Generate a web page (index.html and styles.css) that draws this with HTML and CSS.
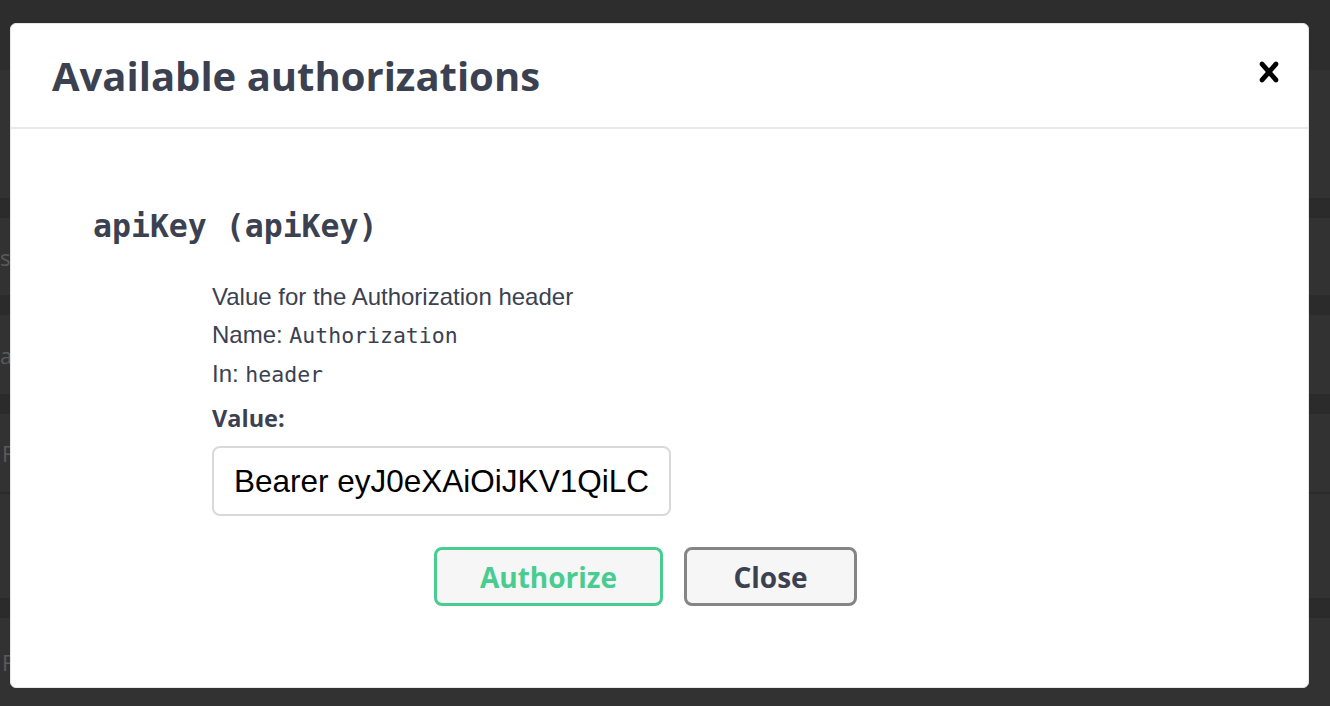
FILE: index.html
```html
<!DOCTYPE html>
<html>
<head>
<meta charset="utf-8">
<link rel="stylesheet" href="styles.css">
</head>
<body>
<div class="page">
  <div class="topbar"></div>
  <div class="row r1"></div>
  <div class="band"></div>
  <div class="row r2"><span class="ghost g-s">s</span></div>
  <div class="band"></div>
  <div class="row r3"><span class="ghost g-a">a</span></div>
  <div class="band"></div>
  <div class="row r4"><span class="ghost g-f">F</span></div>
  <div class="line"></div>
  <div class="row r5"></div>
  <div class="band"></div>
  <div class="row r6"><span class="ghost g-f">F</span></div>
</div>

<div class="modal">
  <div class="modal-header">
    <h3 class="modal-title">Available authorizations</h3>
    <button class="close-icon" aria-label="close">
      <svg width="40" height="40" viewBox="0 0 20 20"><path d="M14.348 14.849c-.469.469-1.229.469-1.697 0L10 11.819l-2.651 3.029c-.469.469-1.229.469-1.697 0-.469-.469-.469-1.229 0-1.697l2.758-3.150-2.759-3.152c-.469-.469-.469-1.228 0-1.697.469-.469 1.228-.469 1.697 0L10 8.183l2.651-3.031c.469-.469 1.228-.469 1.697 0 .469.469.469 1.229 0 1.697l-2.758 3.152 2.758 3.150c.469.469.469 1.229 0 1.698z" fill="#000"/></svg>
    </button>
  </div>
  <div class="modal-body">
    <h4 class="scheme-title">apiKey (apiKey)</h4>
    <div class="scheme-info">
      <div class="info-line">Value for the Authorization header</div>
      <div class="info-line">Name: <code>Authorization</code></div>
      <div class="info-line">In: <code>header</code></div>
      <label class="value-label">Value:</label>
      <input class="value-input" type="text" value="Bearer eyJ0eXAiOiJKV1QiLC">
    </div>
    <div class="btn-row">
      <button class="btn btn-authorize">Authorize</button>
      <button class="btn btn-close">Close</button>
    </div>
  </div>
</div>
</body>
</html>
```
FILE: styles.css
```css
* { box-sizing: border-box; }
html, body {
  margin: 0;
  padding: 0;
  width: 1330px;
  height: 706px;
  overflow: hidden;
  background: #313131;
}
.page {
  display: flex;
  flex-direction: column;
  height: 706px;
}
.topbar { height: 70px; background: #2d2d2d; }
.row {
  background: #323232;
  display: flex;
  align-items: center;
  font-family: "Open Sans", sans-serif;
  font-size: 22px;
  color: #5a5a5a;
}
.r1 { height: 128px; }
.r2 { height: 77px; }
.r3 { height: 79px; }
.r4 { height: 78px; }
.r5 { height: 104px; }
.r6 { height: 88px; }
.band { height: 20px; background: #2b2b2b; }
.line { height: 2px; background: #2a2a2a; }
.ghost { display: block; }
.g-s { margin-left: 0; }
.g-a { margin-left: 0; }
.g-f { margin-left: 2px; }

.modal {
  position: absolute;
  left: 10px;
  top: 23px;
  width: 1299px;
  height: 665px;
  background: #fff;
  border: 1px solid #e6e6e6;
  border-radius: 6px;
  font-family: "Open Sans", sans-serif;
  color: #3b4151;
}
.modal-header {
  height: 105px;
  border-bottom: 2px solid #e8e8e8;
  display: flex;
  align-items: center;
  justify-content: space-between;
  padding: 0 19px 0 41px;
}
.modal-title {
  margin: 0;
  font-size: 40px;
  font-weight: 700;
  color: #3b4151;
  line-height: 48px;
}
.close-icon {
  border: 0;
  background: none;
  padding: 0;
  width: 40px;
  height: 40px;
  display: flex;
  margin-top: -7px;
}
.modal-body {
  padding: 77px 0 0 82px;
}
.scheme-title {
  margin: 0;
  font-family: "DejaVu Sans Mono", monospace;
  font-size: 31.5px;
  font-weight: 700;
  line-height: 40px;
  color: #3b4151;
}
.scheme-info {
  margin: 32px 0 0 119px;
  display: flex;
  flex-direction: column;
  align-items: flex-start;
}
.info-line {
  font-family: "Liberation Sans", Arial, sans-serif;
  font-size: 24px;
  line-height: 38px;
  color: #3b4151;
}
.info-line code {
  font-family: "DejaVu Sans Mono", monospace;
  font-size: 21.5px;
  color: #3b4151;
}
.value-label {
  margin-top: 9px;
  font-family: "Open Sans", sans-serif;
  font-weight: 700;
  font-size: 23.5px;
  line-height: 30px;
  color: #3b4151;
}
.value-input {
  margin-top: 13px;
  width: 459px;
  height: 70px;
  border: 2px solid #d9d9d9;
  border-radius: 8px;
  padding: 0 20px;
  font-family: "Liberation Sans", Arial, sans-serif;
  font-size: 31.5px;
  color: #000;
  background: #fff;
  outline: none;
}
.btn-row {
  margin: 31px 0 0 341px;
  display: flex;
  gap: 21px;
}
.btn {
  height: 59px;
  border-radius: 8px;
  background: #f6f6f6;
  font-family: "Open Sans", sans-serif;
  font-weight: 700;
  font-size: 28px;
  padding: 0;
  display: flex;
  align-items: center;
  justify-content: center;
}
.btn-authorize {
  width: 229px;
  border: 3px solid #49cc90;
  color: #49cc90;
}
.btn-close {
  width: 173px;
  border: 3px solid #858585;
  color: #3b4151;
}
```
